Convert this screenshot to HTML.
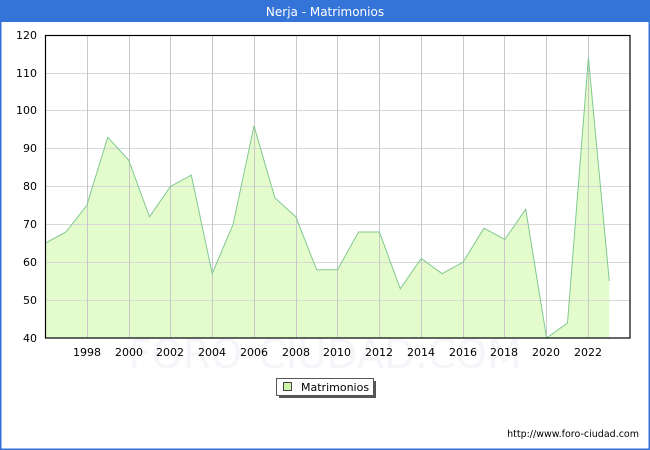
<!DOCTYPE html>
<html><head><meta charset="utf-8"><style>
html,body{margin:0;padding:0;background:#fff;}
body{width:650px;height:450px;overflow:hidden;position:relative;font-family:"DejaVu Sans","Liberation Sans",sans-serif;}
</style></head><body>
<svg width="650" height="450" viewBox="0 0 650 450" xmlns="http://www.w3.org/2000/svg" style="position:absolute;left:0;top:0">
<rect x="0" y="0" width="650" height="450" fill="#fff"/>
<rect x="0.5" y="0.5" width="649" height="449" fill="none" stroke="#3070d8" stroke-width="2"/>
<rect x="0" y="0" width="650" height="22" fill="#3473d8"/>
<text x="325" y="16" text-anchor="middle" fill="#fff" font-size="12" font-family="DejaVu Sans, sans-serif">Nerja - Matrimonios</text>
<text x="325" y="368" text-anchor="middle" fill="#f6f6fa" font-size="40" font-family="DejaVu Sans, sans-serif">FORO-CIUDAD.COM</text>
<polygon fill="#e4fccc" stroke="none" points="45,338 45,243.3 65.9,232 86.8,205.4 107.7,137.3 128.6,160 149.5,216.8 170.4,186.5 191.3,175.1 212.2,273.6 233.1,224.4 254,125.9 274.9,197.9 295.8,216.8 316.7,269.8 337.6,269.8 358.5,232 379.4,232 400.3,288.8 421.2,258.5 442.1,273.6 463,262.3 483.9,228.2 504.8,239.5 525.7,209.2 546.6,338 567.5,322.9 588.4,57.7 609.3,281.2 609.3,338"/>
<g stroke="#d8d8d8" stroke-width="1">
<line x1="45" y1="300.5" x2="630" y2="300.5"/>
<line x1="45" y1="262.5" x2="630" y2="262.5"/>
<line x1="45" y1="224.5" x2="630" y2="224.5"/>
<line x1="45" y1="186.5" x2="630" y2="186.5"/>
<line x1="45" y1="148.5" x2="630" y2="148.5"/>
<line x1="45" y1="110.5" x2="630" y2="110.5"/>
<line x1="45" y1="73.5" x2="630" y2="73.5"/>
</g>
<g stroke="#c8c8c8" stroke-width="1">
<line x1="87.5" y1="35" x2="87.5" y2="338"/>
<line x1="129.5" y1="35" x2="129.5" y2="338"/>
<line x1="170.5" y1="35" x2="170.5" y2="338"/>
<line x1="212.5" y1="35" x2="212.5" y2="338"/>
<line x1="254.5" y1="35" x2="254.5" y2="338"/>
<line x1="296.5" y1="35" x2="296.5" y2="338"/>
<line x1="337.5" y1="35" x2="337.5" y2="338"/>
<line x1="379.5" y1="35" x2="379.5" y2="338"/>
<line x1="421.5" y1="35" x2="421.5" y2="338"/>
<line x1="463.5" y1="35" x2="463.5" y2="338"/>
<line x1="504.5" y1="35" x2="504.5" y2="338"/>
<line x1="546.5" y1="35" x2="546.5" y2="338"/>
<line x1="588.5" y1="35" x2="588.5" y2="338"/>
</g>
<polyline fill="none" stroke="#80c890" stroke-width="1" points="45,243.3 65.9,232 86.8,205.4 107.7,137.3 128.6,160 149.5,216.8 170.4,186.5 191.3,175.1 212.2,273.6 233.1,224.4 254,125.9 274.9,197.9 295.8,216.8 316.7,269.8 337.6,269.8 358.5,232 379.4,232 400.3,288.8 421.2,258.5 442.1,273.6 463,262.3 483.9,228.2 504.8,239.5 525.7,209.2 546.6,338 567.5,322.9 588.4,57.7 609.3,281.2"/>
<rect x="45.5" y="35.5" width="584.5" height="302.5" fill="none" stroke="#000" stroke-width="1.2"/>
<g font-size="11" fill="#000" text-anchor="end" font-family="DejaVu Sans, sans-serif">
<text x="37" y="342">40</text><text x="37" y="304">50</text><text x="37" y="266">60</text><text x="37" y="228">70</text><text x="37" y="190">80</text><text x="37" y="152">90</text><text x="37" y="114">100</text><text x="37" y="77">110</text><text x="37" y="39">120</text>
</g>
<g font-size="11" fill="#000" text-anchor="middle" font-family="DejaVu Sans, sans-serif">
<text x="87" y="356">1998</text><text x="129" y="356">2000</text><text x="170" y="356">2002</text><text x="212" y="356">2004</text><text x="254" y="356">2006</text><text x="296" y="356">2008</text><text x="337" y="356">2010</text><text x="379" y="356">2012</text><text x="421" y="356">2014</text><text x="463" y="356">2016</text><text x="504" y="356">2018</text><text x="546" y="356">2020</text><text x="588" y="356">2022</text>
</g>
<rect x="279" y="381" width="97" height="17" fill="#555"/>
<rect x="276.5" y="378.5" width="97" height="17" fill="#fff" stroke="#555"/>
<rect x="283.5" y="382.5" width="8" height="8" fill="#ccf5a8" stroke="#444"/>
<text x="301" y="391" font-size="11" fill="#000" font-family="DejaVu Sans, sans-serif">Matrimonios</text>
<text x="639" y="437" text-anchor="end" font-size="9.5" fill="#000" font-family="DejaVu Sans, sans-serif">http://www.foro-ciudad.com</text>
</svg>
</body></html>
